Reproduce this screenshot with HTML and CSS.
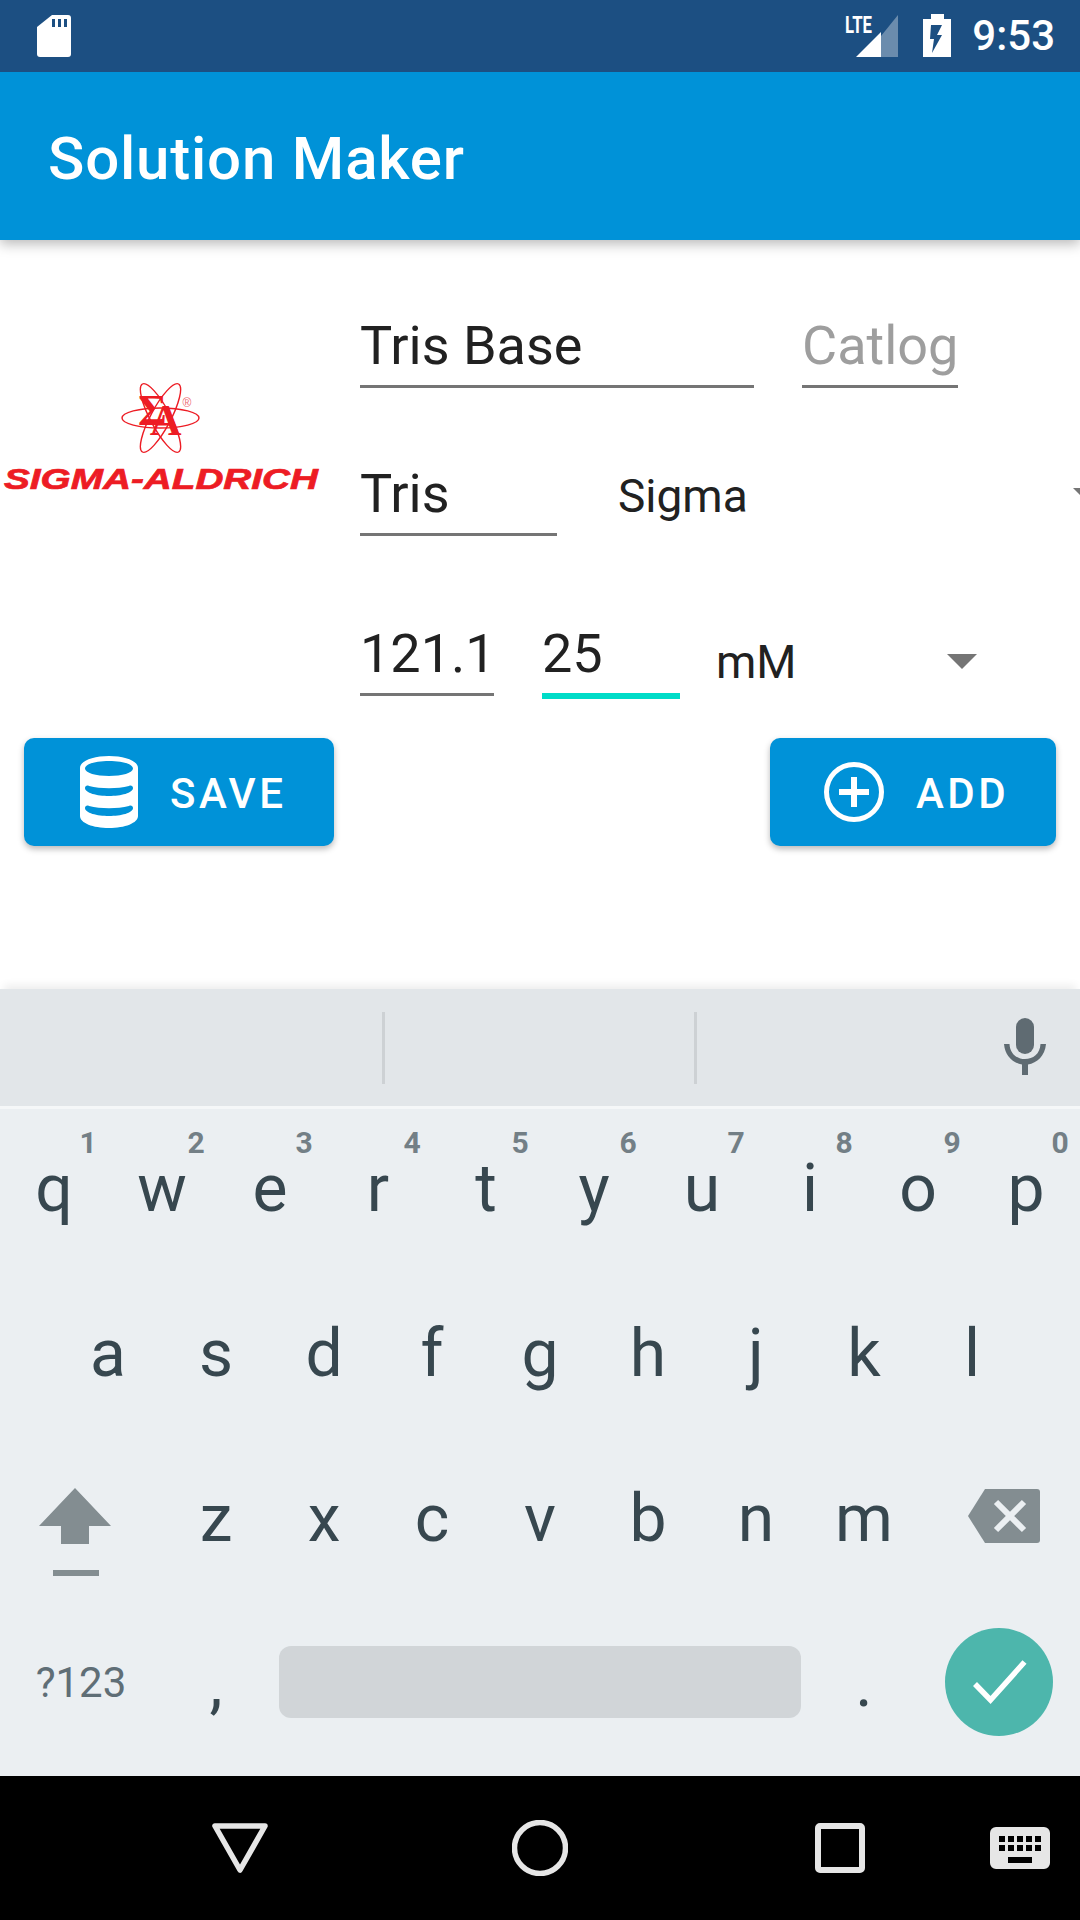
FILE: index.html
```html
<!DOCTYPE html>
<html lang="en">
<head>
<meta charset="utf-8">
<title>Solution Maker</title>
<link rel="stylesheet" href="styles.css">
</head>
<body>
<div class="screen">
  <header class="status">
    <svg class="sd" viewBox="0 0 34 72" width="34" height="72"><path class="w" d="M15 15H31a3 3 0 0 1 3 3V54a3 3 0 0 1-3 3H3a3 3 0 0 1-3-3V27Z"/><path class="b" d="M15 19h3v8h-3zM21 19h3v8h-3zM27 19h3v8h-3z"/></svg>
    <div class="status-right">
      <svg class="signal" viewBox="0 0 53 72" width="53" height="72"><text class="lte" x="0" y="33" textLength="27" lengthAdjust="spacingAndGlyphs">LTE</text><path class="w faded" d="M53 15V57H36V36Z"/><path class="w" d="M11 57 36 32V57Z"/></svg>
      <svg class="battery" viewBox="0 0 28 72" width="28" height="72"><path class="w" d="M8 14H21V19H28V57H0V19H8Z"/><path class="b" d="M8 25H19L14 35H19L9 53 11 39H7Z"/></svg>
      <span class="clock">9:53</span>
    </div>
  </header>
  <div class="appbar"><h1 class="title">Solution Maker</h1></div>

  <main class="form">
    <div class="top">
      <div class="logo-col">
        <svg class="logo" viewBox="0 0 340 116" width="340" height="116">
          <g class="orbits">
            <ellipse cx="160.5" cy="36" rx="38.5" ry="10"/>
            <ellipse cx="160.5" cy="36" rx="38.5" ry="10" transform="rotate(62 160.5 36)"/>
            <ellipse cx="160.5" cy="36" rx="38.5" ry="10" transform="rotate(-62 160.5 36)"/>
          </g>
          <text class="sym" x="138" y="43">Σ<tspan dx="-17" dy="10">A</tspan></text>
          <text class="reg" x="187" y="25" text-anchor="middle">®</text>
          <text class="brand" x="4" y="107" textLength="314" lengthAdjust="spacingAndGlyphs">SIGMA-ALDRICH</text>
        </svg>
      </div>
      <div class="fields">
        <div class="row row-name">
          <div class="field f-name">Tris Base</div>
          <div class="field f-cat hint">Catlog</div>
        </div>
        <div class="row row-brand">
          <div class="field f-short">Tris</div>
          <div class="select s-brand"><span>Sigma</span><i class="arrow"></i></div>
        </div>
        <div class="row row-conc">
          <div class="field f-mw">121.1</div>
          <div class="field f-conc focused">25</div>
          <div class="select s-unit"><span>mM</span><i class="arrow"></i></div>
        </div>
      </div>
    </div>
    <div class="actions">
      <button class="btn btn-save">
        <svg viewBox="0 0 58 72" width="58" height="72"><path class="w" fill-rule="evenodd" d="M0 12C0 5 13 0 29 0S58 5 58 12V60C58 67 45 72 29 72S0 67 0 60ZM5 12.500C5 17 16 20 29 20S53 17 53 12.500 42 5 29 5 5 8 5 12.500ZM5 32C5 37 17 40 29 40S53 37 53 32C53 30 51 29 49 30 37 33 21 33 9 30 7 29 5 30 5 32ZM5 52C5 57 17 60 29 60S53 57 53 52C53 50 51 49 49 50 37 53 21 53 9 50 7 49 5 50 5 52Z"/></svg>
        <span class="btn-label">SAVE</span>
      </button>
      <button class="btn btn-add">
        <svg viewBox="0 0 60 60" width="60" height="60"><circle class="ring" cx="30" cy="30" r="27.500"/><path class="w" d="M27 15h6v12h12v6H33v12h-6V33H15v-6h12Z"/></svg>
        <span class="btn-label">ADD</span>
      </button>
    </div>
  </main>

  <section class="keyboard">
    <div class="strip">
      <i class="divider"></i><i class="divider"></i>
      <svg class="mic" viewBox="0 0 42 58" width="42" height="58"><rect x="12" y="0" width="18" height="36" rx="9"/><path d="M0 26H5.500C6 36 13 41 21 41S36 36 36.500 26H42C41 38 33 45 24 46.500V57H18V46.500C9 45 1 38 0 26Z"/></svg>
    </div>
    <div class="keys">
      <div class="key">q<sup>1</sup></div><div class="key">w<sup>2</sup></div><div class="key">e<sup>3</sup></div><div class="key">r<sup>4</sup></div><div class="key">t<sup>5</sup></div><div class="key">y<sup>6</sup></div><div class="key">u<sup>7</sup></div><div class="key">i<sup>8</sup></div><div class="key">o<sup>9</sup></div><div class="key">p<sup>0</sup></div>
      <div class="key first-a">a</div><div class="key">s</div><div class="key">d</div><div class="key">f</div><div class="key">g</div><div class="key">h</div><div class="key">j</div><div class="key">k</div><div class="key">l</div>
      <div class="key wide">
        <svg viewBox="0 0 162 165" width="162" height="165"><path class="shift" d="M75 49 111 87H89V105H61V87H39ZM53 131H99V137H53Z"/></svg>
      </div>
      <div class="key">z</div><div class="key">x</div><div class="key">c</div><div class="key">v</div><div class="key">b</div><div class="key">n</div><div class="key">m</div>
      <div class="key wide">
        <svg viewBox="0 0 162 165" width="162" height="165"><path class="shift" d="M67 50H119a3 3 0 0 1 3 3V101a3 3 0 0 1-3 3H67L50 77Z"/><path class="bs-x" d="M78 63 106 91M106 63 78 91"/></svg>
      </div>
      <div class="key wide sym-key">?123</div>
      <div class="key">,</div>
      <div class="space"></div>
      <div class="key">.</div>
      <div class="key wide done-cell">
        <svg viewBox="0 0 108 108" width="108" height="108"><circle class="done" cx="54" cy="54" r="54"/><path class="check" d="M30 56 45.500 72 79.500 34"/></svg>
      </div>
    </div>
  </section>

  <nav class="navbar">
    <svg viewBox="0 0 56 50" width="56" height="50"><path class="nav" d="M3 3H53L28 47Z"/></svg>
    <svg viewBox="0 0 56 56" width="56" height="56"><circle class="nav" cx="28" cy="28" r="25.500"/></svg>
    <svg viewBox="0 0 50 50" width="50" height="50"><rect class="nav square" x="3" y="3" width="44" height="44" rx="2"/></svg>
    <svg viewBox="0 0 60 42" width="60" height="42"><path class="kb" fill-rule="evenodd" d="M6 0H54a6 6 0 0 1 6 6V36a6 6 0 0 1-6 6H6a6 6 0 0 1-6-6V6a6 6 0 0 1 6-6ZM9 9v6h6V9ZM18 9v6h6V9ZM27 9v6h6V9ZM36 9v6h6V9ZM45 9v6h6V9ZM9 18v6h6v-6ZM18 18v6h6v-6ZM27 18v6h6v-6ZM36 18v6h6v-6ZM45 18v6h6v-6ZM18 30v6h24v-6Z"/></svg>
  </nav>
</div>
</body>
</html>
```
FILE: styles.css
```css
* { box-sizing: border-box; }
html, body { margin: 0; padding: 0; }
body { width: 1080px; height: 1920px; overflow: hidden; font-family: Roboto, "Noto Sans", sans-serif; background: #fff; }
svg { display: block; }
.w { fill: #fff; }
.b { fill: #1c4f82; }
.faded { fill-opacity: .35; }

.screen { width: 1080px; height: 1920px; display: flex; flex-direction: column; overflow: hidden; }

.status { height: 72px; flex: none; background: #1c4f82; display: flex; justify-content: space-between; padding: 0 25px 0 37px; position: relative; z-index: 3; }
.status-right { display: flex; align-items: flex-start; }
.lte { font: 700 24px Roboto, sans-serif; fill: #fff; }
.signal { margin-right: 25px; }
.battery { margin-right: 21px; }
.clock { color: #fff; font-size: 42px; font-weight: 500; line-height: 72px; }

.appbar { height: 168px; flex: none; background: #0092d8; display: flex; align-items: center; padding: 5px 0 0 48px; box-shadow: 0 4px 12px rgba(0,0,0,.28); position: relative; z-index: 2; }
.title { margin: 0; color: #fff; font-size: 60px; font-weight: 500; line-height: 72px; letter-spacing: .8px; }

.form { flex: 1; background: #fff; }
.top { display: flex; height: 498px; padding-top: 74px; }
.logo-col { width: 360px; flex: none; }
.logo { margin-top: 68px; }
.orbits ellipse { fill: none; stroke: #ed1c24; stroke-width: 1.4; }
.sym { font: 700 44px "Liberation Serif", serif; fill: #ed1c24; }
.reg { font: 400 12px "Liberation Sans", sans-serif; fill: #ed6a70; }
.brand { font: italic 700 29.500px "Liberation Sans", sans-serif; fill: #ed1c24; stroke: #ed1c24; stroke-width: .7; }

.fields { width: 720px; flex: none; overflow: hidden; }
.row { display: flex; align-items: flex-start; }
.row-brand { margin-top: 74px; }
.row-conc { margin-top: 86px; }
.field { flex: none; font-size: 54px; line-height: 64px; color: #212121; border-bottom: 3px solid #757575; padding-bottom: 7px; }
.f-name { width: 394px; margin-right: 48px; }
.f-cat { width: 156px; }
.hint { color: #9e9e9e; }
.f-short { width: 197px; margin-right: 61px; }
.f-mw { width: 134px; margin-right: 48px; }
.f-conc { width: 138px; margin-right: 36px; }
.focused { border-bottom: 6px solid #00dcc8; }
.select { flex: none; display: flex; justify-content: space-between; font-size: 46px; line-height: 64px; color: #212121; }
.s-brand { width: 485px; padding-top: 2px; }
.s-unit { width: 261px; padding-top: 8px; }
.arrow { display: block; width: 0; height: 0; border-left: 15px solid transparent; border-right: 15px solid transparent; border-top: 15px solid #757575; }
.s-brand .arrow { margin-top: 24px; }
.s-unit .arrow { margin-top: 24px; }

.actions { display: flex; justify-content: space-between; padding: 0 24px; }
.btn { height: 108px; border: 0; border-radius: 10px; background: #0092d8; color: #fff; display: flex; align-items: center; gap: 32px; font: 500 42px Roboto, sans-serif; letter-spacing: 3.500px; box-shadow: 0 3px 6px rgba(0,0,0,.28); }
.btn-label { padding-top: 2px; }
.btn-save { width: 310px; padding: 0 0 0 56px; }
.btn-add { width: 286px; padding: 0 0 0 54px; }
.ring { fill: none; stroke: #fff; stroke-width: 5; }

.keyboard { height: 787px; flex: none; background: #ebeff2; position: relative; box-shadow: 0 -8px 8px -4px rgba(0,0,0,.07); }
.strip { height: 117px; background: #e2e6e9; display: flex; position: relative; padding: 23px 0 0 382px; }
.divider { display: block; width: 3px; height: 72px; background: #cdd1d4; margin-right: 309px; }
.mic { position: absolute; left: 1004px; top: 29px; }
.mic rect, .mic path { fill: #5f6b72; }
.keys { border-top: 3px solid #f5f7f8; display: grid; grid-template-columns: repeat(20, 54px); grid-auto-rows: 165px; padding-bottom: 7px; }
.key { grid-column: span 2; position: relative; text-align: center; font-size: 66px; line-height: 159px; color: #37474f; }
.key sup { position: absolute; left: 73px; top: 19px; width: 30px; font-size: 30px; line-height: 30px; font-weight: 700; color: #737f86; }
.first-a { grid-column: 2 / span 2; }
.wide { grid-column: span 3; }
.shift { fill: #838d91; }
.bs-x { fill: none; stroke: #ebeff2; stroke-width: 6; }
.sym-key { font-size: 42px; line-height: 157px; color: #5f6e76; }
.space { grid-column: span 10; height: 72px; margin: 42px 9px 0; border-radius: 12px; background: #d1d5d8; }
.done-cell { padding: 24px 27px 0; }
.done { fill: #4db6ac; }
.check { fill: none; stroke: #fff; stroke-width: 5.500; }

.navbar { height: 144px; flex: none; background: #000; position: relative; }
.navbar svg { position: absolute; top: 47px; }
.navbar svg:nth-child(1) { left: 212px; }
.navbar svg:nth-child(2) { left: 512px; top: 44px; }
.navbar svg:nth-child(3) { left: 815px; }
.navbar svg:nth-child(4) { left: 990px; top: 51px; }
.nav { fill: none; stroke: #e6e6e6; stroke-width: 5.500; stroke-linejoin: round; }
.square { stroke-width: 6; }
.kb { fill: #e6e6e6; }
```
